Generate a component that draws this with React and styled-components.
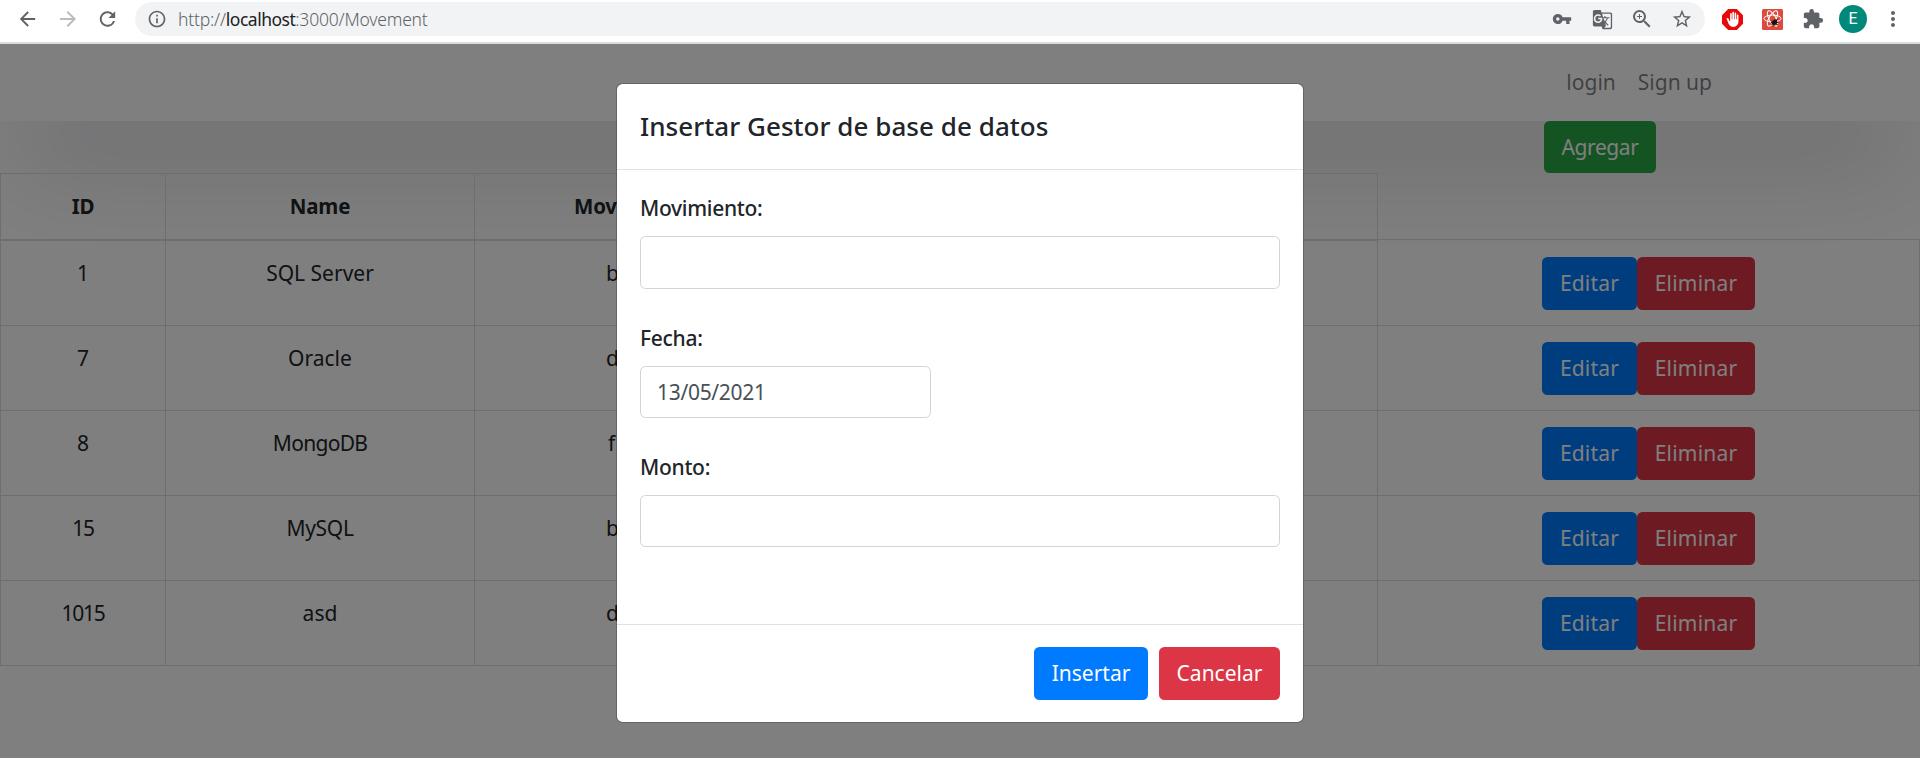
import React from "react";
import styled, { createGlobalStyle, css } from "styled-components";
import {
  MdArrowBack, MdArrowForward, MdRefresh, MdInfoOutline, MdVpnKey,
  MdGTranslate, MdZoomIn, MdStarBorder, MdExtension, MdMoreVert, MdBackHand,
} from "react-icons/md";

const GlobalStyle = createGlobalStyle`
  *, *::before, *::after { box-sizing: border-box; }
  html, body { margin: 0; height: 758px; overflow: hidden; }
  body {
    background: #fff;
    color: #212529;
    font: 400 21px/33px "Noto Sans", "Open Sans", sans-serif;
  }
`;

const Window = styled.div`
  display: flex;
  flex-direction: column;
  height: 758px;
`;

const BrowserBar = styled.header`
  display: flex;
  align-items: center;
  height: 44px;
  padding: 0 0 4px 16px;
  border-bottom: 2px solid #dadce0;
  color: #5f6368;
  flex: none;
`;

const IconSlot = styled.span`
  display: flex;
  align-items: center;
  justify-content: center;
  flex: none;
  width: ${(p) => p.$w || 40}px;
  color: ${(p) => p.$color || "#5f6368"};
`;

const Address = styled.div`
  display: flex;
  align-items: center;
  flex: none;
  width: 1570px;
  height: 34px;
  border-radius: 17px;
  background: #f1f3f4;
  padding: 0 3px 0 12px;
`;

const Url = styled.div`
  flex: 1;
  margin-left: 11px;
  font-size: 17.5px;
  font-weight: 300;
  line-height: 34px;
  letter-spacing: -0.2px;
  color: #5f6368;
  b { font-weight: 400; color: #202124; letter-spacing: -0.5px; }
`;

const Avatar = styled.span`
  display: flex;
  align-items: center;
  justify-content: center;
  flex: none;
  width: 28px;
  height: 28px;
  border-radius: 50%;
  background: #00897b;
  color: #fff;
  font: 400 16px/28px Roboto, sans-serif;
`;

const Viewport = styled.main`
  position: relative;
  flex: 1;
  overflow: hidden;
`;

const Navbar = styled.nav`
  display: flex;
  justify-content: flex-end;
  gap: 22px;
  height: 77px;
  padding: 22px 208px 0 0;
  background: #fff;
  box-shadow: 0 50px 100px -20px rgba(38, 38, 62, 0.3);
`;

const NavLink = styled.a`
  color: rgba(0, 0, 0, 0.5);
`;

const tones = { success: "#28a745", primary: "#007bff", danger: "#dc3545" };

const Button = styled.button`
  width: ${(p) => p.$w}px;
  height: ${(p) => p.$h || 53}px;
  padding: 0;
  border: 0;
  border-radius: 5.5px;
  background: ${(p) => tones[p.$tone]};
  color: #fff;
  font: inherit;
  letter-spacing: ${(p) => p.$track || 0}px;
`;

const ActionBar = styled.div`
  display: flex;
  padding-left: 1544px;
  height: 52px;
`;

const Table = styled.table`
  width: 1920px;
  table-layout: fixed;
  border-collapse: collapse;
  text-align: center;
`;

const edge = css`1px solid #d8dce0`;

const HeadCell = styled.th`
  height: 66px;
  padding: 0 0 0 ${(p) => p.$indent || 0}px;
  border: ${edge};
  border-bottom-width: 2px;
  text-align: ${(p) => (p.$indent ? "left" : "center")};
  font-weight: 700;
  font-size: 20.5px;
  letter-spacing: -0.2px;
`;

const BlankHead = styled.th`
  padding: 0;
`;

const Cell = styled.td`
  height: 85px;
  padding: 16px 0 0 ${(p) => p.$indent || 0}px;
  border: ${edge};
  vertical-align: top;
  text-align: ${(p) => (p.$indent ? "left" : "center")};
  letter-spacing: ${(p) => p.$track || 0}px;
  tr:first-child > & { height: 86px; }
`;

const RowActions = styled.div`
  display: flex;
  tr:first-child & { margin-top: 1px; }
`;

const Backdrop = styled.div`
  position: absolute;
  inset: 0;
  background: rgba(0, 0, 0, 0.5);
`;

const Dialog = styled.section`
  position: absolute;
  left: 616px;
  top: 39px;
  width: 688px;
  height: 640px;
  display: flex;
  flex-direction: column;
  border: 1px solid rgba(0, 0, 0, 0.2);
  border-radius: 6.6px;
  background: #fff;
  background-clip: padding-box;
`;

const DialogHeader = styled.div`
  height: 86px;
  padding: 22px 23px;
  border-bottom: 1px solid #dee2e6;
`;

const Title = styled.h5`
  margin: 0;
  font-weight: 500;
  font-size: 26px;
  line-height: 41px;
  letter-spacing: 0.04px;
`;

const DialogBody = styled.div`
  flex: 1;
  display: flex;
  flex-direction: column;
  gap: 33px;
  padding: 22px 23px 0;
`;

const Field = styled.label`
  display: flex;
  flex-direction: column;
  font-weight: 500;
  gap: 11px;
  letter-spacing: -0.3px;
`;

const Input = styled.input`
  width: ${(p) => p.$w || 640}px;
  height: ${(p) => p.$h || 53}px;
  padding: 0 16px 1px;
  border: 1px solid #ced4da;
  border-radius: 5.5px;
  background: #fff;
  color: #495057;
  font: inherit;
  font-weight: 400;
  letter-spacing: -0.3px;
  outline: 0;
`;

const DialogFooter = styled.div`
  display: flex;
  justify-content: flex-end;
  gap: 11px;
  height: 98px;
  padding: 22px 23px;
  border-top: 1px solid #dee2e6;
`;

const rows = [
  { id: "1", name: "SQL Server", kind: "b" },
  { id: "7", name: "Oracle", kind: "d" },
  { id: "8", name: "MongoDB", kind: "f", track: -0.7 },
  { id: "15", name: "MySQL", kind: "b", track: -0.3 },
  { id: "1015", name: "asd", kind: "d" },
];

function BlockerIcon() {
  return (
    <svg width="21" height="21" viewBox="0 0 21 21">
      <path d="M6.2 0h8.6L21 6.2v8.6L14.8 21H6.2L0 14.8V6.2z" fill="#e60a0a" />
      <g transform="translate(3 2.6) scale(.64)">
        <MdBackHand size={24} color="#fff" />
      </g>
    </svg>
  );
}

function AtomIcon() {
  return (
    <svg width="21" height="21" viewBox="0 0 21 21">
      <rect width="21" height="21" rx="1.5" fill="#dc4b3e" />
      <g fill="none" stroke="#fff" strokeWidth="1">
        <ellipse cx="10.5" cy="9.5" rx="8.6" ry="3.4" />
        <ellipse cx="10.5" cy="9.5" rx="8.6" ry="3.4" transform="rotate(60 10.5 9.5)" />
        <ellipse cx="10.5" cy="9.5" rx="8.6" ry="3.4" transform="rotate(120 10.5 9.5)" />
      </g>
      <ellipse cx="12.5" cy="13.2" rx="2.3" ry="3.2" fill="#1c0f0e" transform="rotate(35 12.5 13.2)" />
      <path d="M8.5 11.5l7.5 4.5M9.5 15.5l6-5M11.5 17.5l4-7.5M9 13.5h7.5" stroke="#1c0f0e" strokeWidth=".9" />
    </svg>
  );
}

export default function App() {
  return (
    <Window>
      <GlobalStyle />
      <BrowserBar>
        <IconSlot $w={23}><MdArrowBack size={24} /></IconSlot>
        <IconSlot $w={57} $color="#babcbe"><MdArrowForward size={24} /></IconSlot>
        <IconSlot $w={23}><MdRefresh size={26} /></IconSlot>
        <IconSlot $w={16} />
        <Address>
          <IconSlot $w={20}><MdInfoOutline size={20} /></IconSlot>
          <Url>http://<b>localhost</b>:3000/Movement</Url>
          <IconSlot><MdVpnKey size={20} /></IconSlot>
          <IconSlot><MdGTranslate size={21} /></IconSlot>
          <IconSlot><MdZoomIn size={24} /></IconSlot>
          <IconSlot><MdStarBorder size={22} /></IconSlot>
        </Address>
        <IconSlot $w={55}><BlockerIcon /></IconSlot>
        <IconSlot $w={25}><AtomIcon /></IconSlot>
        <IconSlot $w={55}><MdExtension size={22} /></IconSlot>
        <IconSlot $w={26}><Avatar>E</Avatar></IconSlot>
        <IconSlot $w={54}><MdMoreVert size={24} /></IconSlot>
      </BrowserBar>
      <Viewport>
        <Navbar>
          <NavLink>login</NavLink>
          <NavLink>Sign up</NavLink>
        </Navbar>
        <ActionBar>
          <Button $tone="success" $w={112} $h={52} $track={-0.4}>Agregar</Button>
        </ActionBar>
        <Table>
          <colgroup>
            <col style={{ width: 165 }} />
            <col style={{ width: 309 }} />
            <col style={{ width: 310 }} />
            <col style={{ width: 593 }} />
            <col />
          </colgroup>
          <thead>
            <tr>
              <HeadCell>ID</HeadCell>
              <HeadCell>Name</HeadCell>
              <HeadCell $indent={99}>Movement</HeadCell>
              <HeadCell />
              <BlankHead />
            </tr>
          </thead>
          <tbody>
            {rows.map((r) => (
              <tr key={r.id}>
                <Cell $track={r.id.length > 1 ? -1.3 : 0}>{r.id}</Cell>
                <Cell $track={r.track}>{r.name}</Cell>
                <Cell $indent={r.kind === "f" ? 133 : 131}>{r.kind}</Cell>
                <Cell />
                <Cell $indent={164}>
                  <RowActions>
                    <Button $tone="primary" $w={95} $track={0.2}>Editar</Button>
                    <Button $tone="danger" $w={118} $track={0.2}>Eliminar</Button>
                  </RowActions>
                </Cell>
              </tr>
            ))}
          </tbody>
        </Table>
        <Backdrop />
        <Dialog>
          <DialogHeader><Title>Insertar Gestor de base de datos</Title></DialogHeader>
          <DialogBody>
            <Field>Movimiento:<Input /></Field>
            <Field>Fecha:<Input $w={291} $h={52} defaultValue="13/05/2021" /></Field>
            <Field>Monto:<Input $h={52} /></Field>
          </DialogBody>
          <DialogFooter>
            <Button $tone="primary" $w={114}>Insertar</Button>
            <Button $tone="danger" $w={121}>Cancelar</Button>
          </DialogFooter>
        </Dialog>
      </Viewport>
    </Window>
  );
}
